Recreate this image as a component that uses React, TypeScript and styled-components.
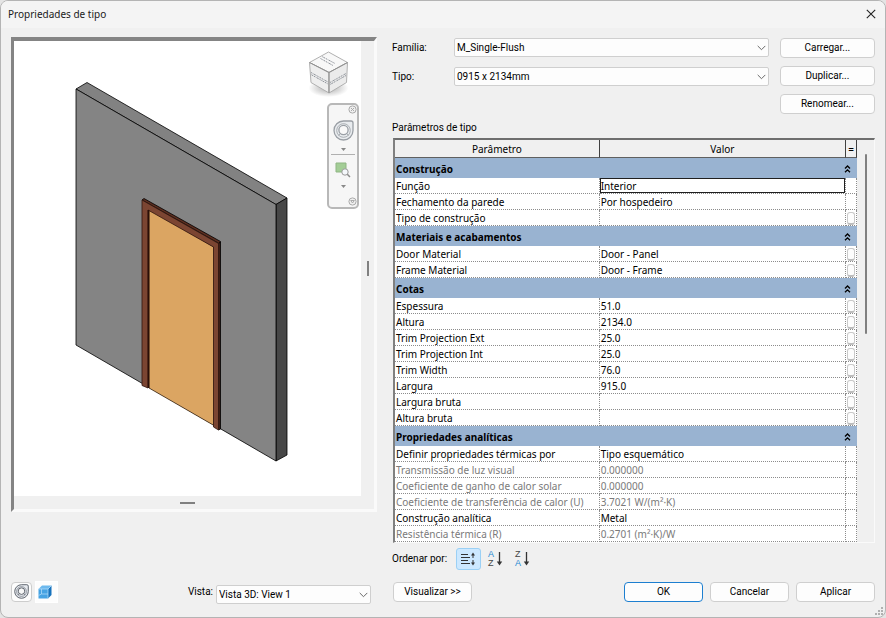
import React from "react";
import styled, { createGlobalStyle, css } from "styled-components";

const Global = createGlobalStyle`
  * { box-sizing: border-box; }
  body { margin: 0; background: #e4e4e4; }
  button, select, input { font: inherit; color: inherit; margin: 0; padding: 0; }
`;

const uiFont = `Roboto, "Liberation Sans", sans-serif`;
const gridFont = `"Noto Sans", "Open Sans", sans-serif`;

const Dialog = styled.main`
  display: flex;
  flex-direction: column;
  min-height: 100vh;
  background: #f0f0f0;
  border: 1px solid #b4b4b4;
  border-radius: 8px;
  font: 10px/14px ${uiFont};
  color: #000;
  overflow: hidden;
  position: relative;
`;

const TitleBar = styled.header`
  display: flex;
  align-items: center;
  justify-content: space-between;
  height: 27px;
  padding: 0 8px 2px 7px;
  background: #f4f4f4;
`;

const Title = styled.h1`
  margin: 0;
  font: 400 10px/14px ${gridFont};
  color: #1a1a1a;
`;

const CloseButton = styled.button`
  display: grid;
  place-items: center;
  width: 12px;
  height: 12px;
  border: 0;
  background: none;
`;

const Body = styled.div`
  flex: 1;
  display: grid;
  grid-template-columns: minmax(0, 366fr) minmax(0, 483fr);
  column-gap: 15px;
  padding: 9px 10px 14px 10px;
`;

const Column = styled.section`
  display: flex;
  flex-direction: column;
`;

const Preview = styled.div`
  display: grid;
  grid-template-columns: minmax(0, 1fr) 13px;
  grid-template-rows: minmax(0, 1fr) 13px;
  height: 475px;
  border-style: solid;
  border-width: 4px 3px 3px 3px;
  border-color: #848484 #fafafa #fafafa #848484;
`;

const Canvas = styled.div`
  position: relative;
  background: #fff;
  overflow: hidden;
`;

const Scene = styled.svg`
  display: block;
  width: 347px;
  height: 455px;
`;

const ViewCube = styled.svg`
  position: absolute;
  top: 7px;
  right: 11px;
`;

const NavBar = styled.div`
  position: absolute;
  top: 62px;
  right: 2px;
  display: flex;
  flex-direction: column;
  align-items: center;
  width: 32px;
  height: 106px;
  border: 2px solid #b8b8b8;
  border-radius: 5px;
  background: #f6f6f6;
`;

const NavButton = styled.button<{ $end?: boolean; $h: number }>`
  display: grid;
  place-items: center;
  align-self: ${(p) => (p.$end ? "flex-end" : "center")};
  height: ${(p) => p.$h}px;
  border: 0;
  background: none;
`;

const NavGap = styled.span<{ $h: number }>`
  height: ${(p) => p.$h}px;
`;

const NavRule = styled.hr`
  width: 24px;
  height: 1px;
  margin: 0;
  border: 0;
  background: #b0b0b0;
`;

const Grip = styled.div<{ $vertical?: boolean }>`
  place-self: center;
  background: #808080;
  ${(p) => (p.$vertical ? css`width: 2px; height: 15px;` : css`width: 15px; height: 2px;`)}
`;

const PreviewFooter = styled.footer`
  display: flex;
  align-items: center;
  margin-top: auto;
  height: 23px;
`;

const ToolButton = styled.button<{ $flat?: boolean }>`
  display: grid;
  place-items: center;
  width: 21px;
  height: 20px;
  border: 1px solid #cdcdcd;
  border-radius: 4px;
  background: #fdfdfd;
  ${(p) =>
    p.$flat &&
    css`
      width: 23px;
      height: 22px;
      padding-right: 3px;
      margin-left: 3px;
      border-color: #fff;
      border-radius: 0;
    `}
`;

const ViewPicker = styled.div`
  display: grid;
  grid-template-columns: auto 155px;
  column-gap: 3px;
  margin-left: auto;
  margin-right: 6px;
  padding-top: 6px;
`;

const SelectBox = styled.div`
  display: grid;
  align-items: center;
  & > * {
    grid-area: 1 / 1;
  }
  svg {
    justify-self: end;
    margin-right: 3px;
    pointer-events: none;
  }
`;

const Select = styled.select`
  appearance: none;
  width: 100%;
  height: 19px;
  padding: 0 16px 0 2px;
  border: 1px solid #cfcfcf;
  border-radius: 2px;
  background: #fdfdfd;
`;

const Top = styled.div`
  display: grid;
  grid-template-columns: minmax(0, 376fr) minmax(0, 95fr);
  column-gap: 11px;
  padding-top: 1px;
`;

const Fields = styled.div`
  display: grid;
  grid-template-columns: 62px minmax(0, 1fr);
  align-content: start;
  align-items: center;
  row-gap: 10px;
`;

const ButtonStack = styled.div`
  display: grid;
  row-gap: 8px;
`;

const PushButton = styled.button<{ $primary?: boolean }>`
  height: 20px;
  min-width: 79px;
  border: 1px solid ${(p) => (p.$primary ? "#1d7fd0" : "#cfcfcf")};
  border-radius: 4px;
  background: #fdfdfd;
  line-height: 18px;
`;

const GridCaption = styled.h2`
  margin: 6px 0 2px;
  font: 400 10px/16px ${uiFont};
`;

const GridFrame = styled.div`
  display: flex;
  margin-left: 1px;
  border-style: solid;
  border-width: 2px 1px 1px 2px;
  border-color: #6e6e6e #fafafa #fafafa #808080;
`;

const Table = styled.table`
  flex: 1;
  table-layout: fixed;
  width: 100%;
  border-collapse: separate;
  border-spacing: 0;
  background: #fff;
  font: 10px/14px ${gridFont};
`;

const ParamCol = styled.col`
  width: 44.3%;
`;

const MarkCol = styled.col`
  width: 11px;
`;

const HeadCell = styled.th`
  height: 18px;
  padding: 0;
  font-weight: 400;
  background: #f0f0f0;
  border-right: 1px solid #404040;
  border-bottom: 1px solid #606060;
`;

const GroupCell = styled.th`
  height: 20px;
  padding: 0;
  background: #99b3d1;
  text-align: left;
  font-weight: 700;
`;

const GroupLine = styled.div`
  display: flex;
  align-items: center;
  justify-content: space-between;
  padding: 1px 6px 0 1px;
`;

const Chevrons = styled.button`
  display: grid;
  width: 7px;
  height: 8px;
  border: 0;
  background: none;
`;

const Cell = styled.td<{ $muted?: boolean }>`
  height: 16px;
  padding: 0 0 0 1px;
  border-right: 1px dotted #8c8c8c;
  border-bottom: 1px dotted #8c8c8c;
  color: ${(p) => (p.$muted ? "#7a7a7a" : "#000")};
  white-space: nowrap;
  overflow: hidden;
`;

const NameCell = styled(Cell).attrs({ as: "th", scope: "row" })`
  font-weight: 400;
  text-align: left;
`;

const EditCell = styled(Cell)`
  padding: 0;
`;

const ValueInput = styled.input`
  display: block;
  width: 100%;
  height: 15px;
  border: 1px solid #202020;
  border-radius: 0;
  background: #fff;
`;

const MarkButton = styled.button`
  display: block;
  width: 8px;
  height: 13px;
  margin-top: 1px;
  border: 1px solid #cacaca;
  border-bottom: 2px solid #bdbdbd;
  border-radius: 3px;
  background: #fdfdfd;
`;

const ScrollTrack = styled.div`
  flex: 0 0 17px;
  padding-top: 14px;
`;

const ScrollThumb = styled.div`
  width: 2px;
  height: 180px;
  margin: 0 auto;
  border-radius: 1px;
  background: #808080;
`;

const SortBar = styled.div`
  display: flex;
  align-items: center;
  height: 22px;
  margin-top: 5px;
`;

const SortButton = styled.button<{ $active?: boolean }>`
  display: grid;
  place-items: center;
  width: 25px;
  height: 22px;
  margin-right: 2px;
  border: 1px solid ${(p) => (p.$active ? "#9bd0f5" : "transparent")};
  border-radius: 3px;
  background: ${(p) => (p.$active ? "#cce8ff" : "none")};
`;

const SortLabel = styled.span`
  width: 64px;
`;

const SortIcon = styled.span`
  display: grid;
  grid-template-columns: 8px 7px;
  align-items: center;
`;

const Letters = styled.span`
  display: grid;
  grid-auto-rows: 9px;
  text-align: left;
  font: 9px/9px "Liberation Sans", sans-serif;
`;

const Letter = styled.span<{ $blue: boolean }>`
  color: ${(p) => (p.$blue ? "#1c86d1" : "#444")};
`;

const Actions = styled.footer`
  display: flex;
  gap: 7px;
  margin-top: auto;
  padding: 0 0 1px 1px;
`;

const Spacer = styled.div`
  flex: 1;
`;

const SizeGrip = styled.svg`
  position: absolute;
  right: 1px;
  bottom: 1px;
`;

type Row = { name: string; value?: string; mark?: boolean; muted?: boolean; editing?: boolean };

const groups: { title: string; rows: Row[] }[] = [
  {
    title: "Construção",
    rows: [
      { name: "Função", value: "Interior", editing: true },
      { name: "Fechamento da parede", value: "Por hospedeiro" },
      { name: "Tipo de construção", mark: true },
    ],
  },
  {
    title: "Materiais e acabamentos",
    rows: [
      { name: "Door Material", value: "Door - Panel", mark: true },
      { name: "Frame Material", value: "Door - Frame", mark: true },
    ],
  },
  {
    title: "Cotas",
    rows: [
      { name: "Espessura", value: "51.0", mark: true },
      { name: "Altura", value: "2134.0", mark: true },
      { name: "Trim Projection Ext", value: "25.0", mark: true },
      { name: "Trim Projection Int", value: "25.0", mark: true },
      { name: "Trim Width", value: "76.0", mark: true },
      { name: "Largura", value: "915.0", mark: true },
      { name: "Largura bruta", mark: true },
      { name: "Altura bruta", mark: true },
    ],
  },
  {
    title: "Propriedades analíticas",
    rows: [
      { name: "Definir propriedades térmicas por", value: "Tipo esquemático" },
      { name: "Transmissão de luz visual", value: "0.000000", muted: true },
      { name: "Coeficiente de ganho de calor solar", value: "0.000000", muted: true },
      { name: "Coeficiente de transferência de calor (U)", value: "3.7021 W/(m²·K)", muted: true },
      { name: "Construção analítica", value: "Metal" },
      { name: "Resistência térmica (R)", value: "0.2701 (m²·K)/W", muted: true },
    ],
  },
];

const Arrow = () => (
  <svg width="9" height="6" viewBox="0 0 9 6" fill="none" stroke="#6a6a6a" aria-hidden="true">
    <path d="M.7.9 4.5 4.7 8.3.9" />
  </svg>
);

function Dropdown({ id, value }: { id: string; value: string }) {
  return (
    <SelectBox>
      <Select id={id} defaultValue={value}>
        <option>{value}</option>
      </Select>
      <Arrow />
    </SelectBox>
  );
}

const Wheel = ({ size, stroke, fill }: { size: number; stroke: string; fill: string }) => (
  <svg width={size} height={size} viewBox="0 0 21 21" fill={fill} stroke={stroke} strokeWidth="1.3" aria-hidden="true">
    <path d="M10.5 1H18a2 2 0 0 1 2 2v7.500A9.500 9.500 0 1 1 10.500 1Z" />
    <circle cx="10.500" cy="10.500" r="6.800" fill="none" strokeWidth=".8" />
    <circle cx="10.500" cy="10" r="4.600" fill="#f8f8f8" />
    <path d="m7.200 13.500-1.700 2M13.800 13.500l1.700 2" strokeWidth=".9" />
  </svg>
);

const Caret = () => (
  <svg width="5" height="3" viewBox="0 0 5 3" aria-hidden="true">
    <path d="M0 0h5L2.500 3Z" fill="#888" />
  </svg>
);

const RoundMark = ({ close }: { close?: boolean }) => (
  <svg width="9" height="9" viewBox="0 0 9 9" fill="#f0f0f0" stroke="#aaa" aria-hidden="true">
    <circle cx="4.500" cy="4.500" r="3.600" />
    <path d={close ? "M3 3l3 3M6 3 3 6" : "M2.700 3.500h3.600L4.500 6Z"} />
  </svg>
);

const WallScene = () => (
  <Scene viewBox="14 41 347 455" role="img" aria-label="Vista 3D da porta">
    <g stroke="#000" strokeWidth=".8" strokeLinejoin="round">
      <path d="M76 89 87 82.500 287 198 276 204.500Z" fill="#828282" />
      <path d="M276 204.500 287 198V455L276 461Z" fill="#474747" />
      <path d="M76 89 276 204.500V461L76 345Z" fill="#848484" />
      <path d="M149 209 214 247V425.500L149 388Z" fill="#dba562" stroke="#3c2a18" />
      <path d="M142 200 144 198.500 220.500 241.500 219 243.500Z" fill="#5c2e20" />
      <path d="M218.500 243.500 220.500 242V429L218.500 430Z" fill="#3c1c13" />
      <path d="M142 200 218.500 243.500V430L213.500 427V247L148 210V388L142 385.500Z" fill="#7b4532" stroke="#30150e" />
      <path d="M148.500 210V388" stroke="#2a0e08" strokeWidth="1.600" />
    </g>
  </Scene>
);

const Cube = () => (
  <ViewCube width="44" height="50" viewBox="306 48 44 50" role="img" aria-label="Cubo de vista">
    <defs>
      <radialGradient id="shade">
        <stop offset="0" stopColor="#888" stopOpacity=".7" />
        <stop offset="1" stopColor="#888" stopOpacity="0" />
      </radialGradient>
    </defs>
    <ellipse cx="328.500" cy="88" rx="20" ry="9" fill="url(#shade)" />
    <g stroke="#b0b0b0" strokeLinejoin="round">
      <path d="M328.500 52 347.500 62.500 329 72.500 309.500 62.500Z" fill="#f8f8f8" />
      <path d="M309.500 62.500 329 72.500V93L311 82.500Z" fill="#eeeeee" />
      <path d="M347.500 62.500 329 72.500V93L346.500 82.500Z" fill="#ebebeb" />
      <path d="M309.500 62.500 329 72.500 347.500 62.500M329 72.500V93" fill="none" stroke="#909090" />
    </g>
    <g fill="none" stroke="#8f949b" strokeWidth="1" strokeDasharray="1.500 .7 .8 .5 2 .8">
      <path d="M320.500 58.500 333 65.500" />
      <path d="M322 56.500 335 63.500" strokeDashoffset="2" />
      <path d="M311 72.500 328 82" />
      <path d="M311 74.500 328 84" strokeDashoffset="3" />
      <path d="M330 82.500 346 73.500" />
      <path d="M330 84.500 346 75.500" strokeDashoffset="2" />
    </g>
  </ViewCube>
);

const SortLetters = ({ order }: { order: string[] }) => (
  <SortIcon aria-hidden="true">
    <Letters>
      {order.map((l) => (
        <Letter key={l} $blue={l === "A"}>
          {l}
        </Letter>
      ))}
    </Letters>
    <svg width="7" height="16" viewBox="0 0 7 16">
      <path d="M3.500 1v11" stroke="#333" strokeWidth="1.300" />
      <path d="M.8 10.500h5.400L3.500 14.500Z" fill="#333" />
    </svg>
  </SortIcon>
);

export default function App() {
  return (
    <>
      <Global />
      <Dialog>
        <TitleBar>
          <Title>Propriedades de tipo</Title>
          <CloseButton aria-label="Fechar">
            <svg width="10" height="10" viewBox="0 0 10 10" stroke="#222" strokeWidth="1.100">
              <path d="M.8.8l8.400 8.400M9.200.8.8 9.200" />
            </svg>
          </CloseButton>
        </TitleBar>
        <Body>
          <Column>
            <Preview>
              <Canvas>
                <WallScene />
                <Cube />
                <NavBar>
                  <NavButton $end $h={9} aria-label="Fechar barra">
                    <RoundMark close />
                  </NavButton>
                  <NavButton $h={33} aria-label="Roda de navegação">
                    <Wheel size={21} stroke="#9a9fa5" fill="#e9ecef" />
                  </NavButton>
                  <NavButton $h={4} aria-label="Opções da roda">
                    <Caret />
                  </NavButton>
                  <NavGap $h={3} />
                  <NavRule />
                  <NavButton $h={29} aria-label="Zoom">
                    <svg width="16" height="16" viewBox="0 0 16 16">
                      <path d="M1 1h10v9H1Z" fill="#a3cd96" stroke="#8fb583" />
                      <circle cx="10" cy="10" r="3.200" fill="#f4f7fa" stroke="#9a9a9a" />
                      <path d="m12.300 12.300 2.700 2.700" stroke="#8a8a8a" strokeWidth="1.500" />
                    </svg>
                  </NavButton>
                  <NavButton $h={4} aria-label="Opções de zoom">
                    <Caret />
                  </NavButton>
                  <NavGap $h={9} />
                  <NavButton $end $h={9} aria-label="Personalizar">
                    <RoundMark />
                  </NavButton>
                </NavBar>
              </Canvas>
              <Grip $vertical />
              <Grip />
            </Preview>
            <PreviewFooter>
              <ToolButton aria-label="Navegação">
                <Wheel size={15} stroke="#555c66" fill="#e6e9ee" />
              </ToolButton>
              <ToolButton $flat aria-label="Vista 3D">
                <svg width="14" height="14" viewBox="0 0 14 14">
                  <path d="M.5 4 4 .5h9.500L10 4Z" fill="#6db9ee" />
                  <path d="M10 4 13.500.5V10L10 13.500Z" fill="#1773bd" />
                  <path d="M.5 4H10v9.500H.5Z" fill="#46a3e3" />
                  <path d="M.5 10.500 3.500 9H10M3.500 4v5M.5 4H10v9.500M10 4 13.500.5" stroke="#b9e0fa" strokeWidth=".7" fill="none" />
                </svg>
              </ToolButton>
              <ViewPicker>
                <label htmlFor="view">Vista:</label>
                <Dropdown id="view" value="Vista 3D: View 1" />
              </ViewPicker>
            </PreviewFooter>
          </Column>

          <Column>
            <Top>
              <Fields>
                <label htmlFor="family">Família:</label>
                <Dropdown id="family" value="M_Single-Flush" />
                <label htmlFor="type">Tipo:</label>
                <Dropdown id="type" value="0915 x 2134mm" />
              </Fields>
              <ButtonStack>
                <PushButton>Carregar...</PushButton>
                <PushButton>Duplicar...</PushButton>
                <PushButton>Renomear...</PushButton>
              </ButtonStack>
            </Top>
            <GridCaption id="caption">Parâmetros de tipo</GridCaption>
            <GridFrame>
              <Table aria-labelledby="caption">
                <colgroup>
                  <ParamCol />
                  <col />
                  <MarkCol />
                </colgroup>
                <thead>
                  <tr>
                    <HeadCell>Parâmetro</HeadCell>
                    <HeadCell>Valor</HeadCell>
                    <HeadCell>=</HeadCell>
                  </tr>
                </thead>
                {groups.map((g) => (
                  <tbody key={g.title}>
                    <tr>
                      <GroupCell colSpan={3}>
                        <GroupLine>
                          {g.title}
                          <Chevrons aria-label={`Recolher ${g.title}`}>
                            <svg width="7" height="8" viewBox="0 0 7 8" fill="none" stroke="#000" strokeWidth="1.300">
                              <path d="m1 3.500 2.500-2.500L6 3.500M1 7.300l2.500-2.500L6 7.300" />
                            </svg>
                          </Chevrons>
                        </GroupLine>
                      </GroupCell>
                    </tr>
                    {g.rows.map((r) => (
                      <tr key={r.name}>
                        <NameCell $muted={r.muted}>{r.name}</NameCell>
                        {r.editing ? (
                          <EditCell>
                            <ValueInput aria-label={r.name} defaultValue={r.value} />
                          </EditCell>
                        ) : (
                          <Cell $muted={r.muted}>{r.value}</Cell>
                        )}
                        <Cell>{r.mark && <MarkButton aria-label={`Associar ${r.name}`} />}</Cell>
                      </tr>
                    ))}
                  </tbody>
                ))}
              </Table>
              <ScrollTrack>
                <ScrollThumb />
              </ScrollTrack>
            </GridFrame>
            <SortBar>
              <SortLabel>Ordenar por:</SortLabel>
              <SortButton $active aria-label="Ordem padrão">
                <svg width="17" height="16" viewBox="0 0 17 16" stroke="#333" fill="#333">
                  <path d="M1 3.500h7M1 6.500h9M1 9.500h7M1 12.500h9" strokeWidth="1.100" />
                  <path d="M13 4v3M13 9v3" />
                  <path d="m11 4.500 2-3 2 3ZM11 11.500l2 3 2-3Z" stroke="none" />
                </svg>
              </SortButton>
              <SortButton aria-label="Ordem crescente">
                <SortLetters order={["A", "Z"]} />
              </SortButton>
              <SortButton aria-label="Ordem decrescente">
                <SortLetters order={["Z", "A"]} />
              </SortButton>
            </SortBar>
            <Actions>
              <PushButton>Visualizar &gt;&gt;</PushButton>
              <Spacer />
              <PushButton $primary>OK</PushButton>
              <PushButton>Cancelar</PushButton>
              <PushButton>Aplicar</PushButton>
            </Actions>
          </Column>
        </Body>
        <SizeGrip width="9" height="9" viewBox="0 0 9 9" fill="#b0b0b0" aria-hidden="true">
          <path d="M6 0h2v2H6ZM6 3h2v2H6ZM6 6h2v2H6ZM3 3h2v2H3ZM3 6h2v2H3ZM0 6h2v2H0Z" />
        </SizeGrip>
      </Dialog>
    </>
  );
}
